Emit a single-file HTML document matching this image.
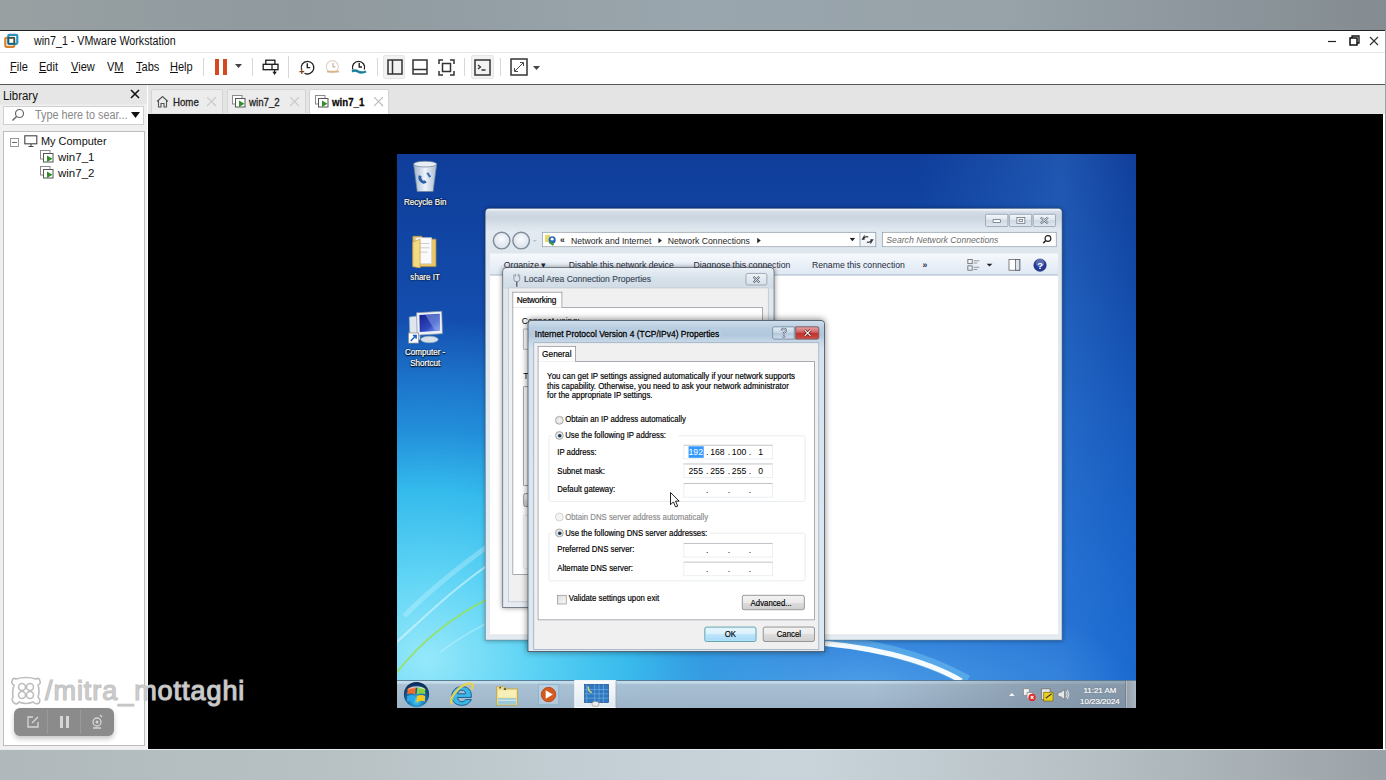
<!DOCTYPE html>
<html><head><meta charset="utf-8">
<style>
*{margin:0;padding:0;box-sizing:border-box}
html,body{width:1386px;height:780px;overflow:hidden;background:#9ba3a9;font-family:"Liberation Sans",sans-serif}
.a{position:absolute}
#topbar{left:0;top:0;width:1386px;height:30px;background:linear-gradient(90deg,#98a0a2 0%,#8f999e 22%,#9aa6ad 50%,#97a2a9 72%,#848c91 100%)}
#botbar{left:0;top:749px;width:1386px;height:31px;background:linear-gradient(90deg,#b0b8bb 0%,#b8c2c5 25%,#c4d0d6 45%,#c9d4da 58%,#b6c0c5 78%,#9ba2a7 100%);border-top:1px solid #e8ecee}
#win{left:0;top:30px;width:1385px;height:719px;background:#fff;border-top:1px solid #222}
#title{left:34px;top:34px;font-size:12px;color:#111;transform:scaleX(0.89);transform-origin:0 0;white-space:nowrap}
#menu{left:0;top:52px;width:1385px;height:32px;border-top:1px solid #e6e6e6;background:#fff}
#menusep{left:0;top:84px;width:1385px;height:1px;background:#555}
.mi{position:absolute;top:60px;font-size:12px;color:#111;transform:scaleX(0.92);transform-origin:0 0}
#lib{left:0;top:85px;width:147px;height:664px;background:linear-gradient(180deg,#e6e6e6 0px,#e6e6e6 19px,#f0f0f0 20px)}
#vmarea{left:148px;top:114px;width:1235px;height:635px;background:#000}
#tabbar{left:148px;top:85px;width:1237px;height:29px;background:#e4e4e4}
#desk{left:397px;top:154px;width:739px;height:554px;overflow:hidden}
#vm{left:0;top:0;width:1024px;height:768px;transform:scale(0.72168);transform-origin:0 0;background:#1d5fbf;overflow:hidden;font-family:"Liberation Sans",sans-serif}
.sep{top:58px;width:1px;height:18px;background:#d8d8d8}
.tab{top:89px;height:24px;background:#ececec;border:1px solid #d4d4d4;border-bottom:none;border-radius:2px 2px 0 0}
.tabt{top:96px;font-size:11px;color:#222;-webkit-text-stroke:0.3px #222;transform:scaleX(0.88);transform-origin:0 0}
.tabx{top:97px;width:10px;height:10px}
.dl{font-size:12px;color:#fff;text-align:center;transform:scaleX(0.93);transform-origin:50% 0;-webkit-text-stroke:0.3px #fff;text-shadow:0 1px 2px #000,0 0 3px rgba(0,0,0,0.9),1px 1px 1px rgba(0,0,0,0.6)}
.cb{height:18px;border:1px solid #8a98a8;border-radius:2px;background:linear-gradient(180deg,#f4f7fa,#dde4ec 50%,#d0d9e3 51%,#dfe6ee)}
.cmd{top:146.5px;font-size:12px;color:#1e2a3a}
.btn{border:1px solid #707070;border-radius:3px;background:linear-gradient(180deg,#f2f2f2 0%,#ebebeb 50%,#dddddd 51%,#cfcfcf 100%)}
.def{border-color:#3a8598;box-shadow:inset 0 0 0 1px #b6f0fa;background:linear-gradient(180deg,#eaf6fd 0%,#d9f0fc 50%,#bee6fd 51%,#a7d9f5 100%)}
.tt{font-size:12px;color:#000;-webkit-text-stroke:0.25px #000}
.sx{transform:scaleX(0.9);transform-origin:0 0;white-space:nowrap}
.rad{width:12px;height:12px;border-radius:50%;border:1px solid #8e8f8f;background:radial-gradient(circle at 50% 50%,#f4f4f4,#d6d6d6)}
.rad.on::after{content:"";position:absolute;left:2.5px;top:2.5px;width:5px;height:5px;border-radius:50%;background:#1d3d5e}
.rad.dis{border-color:#c5c5c5;background:#f4f4f4}
.ipf{width:124px;height:20px;background:#fff;border:1px solid #abadb3;border-color:#abadb3 #e3e9ef #e3e9ef #e3e9ef}
.ipt{font-size:12px;color:#000;width:124px;padding-left:8px;white-space:pre}
.ipt i{font-style:normal;display:inline-block;width:12px;text-align:center}
.ipo{width:30px;text-align:center;font-size:12px;color:#000}
</style></head><body>
<div class="a" id="topbar"></div>
<div class="a" id="botbar"></div>
<div class="a" id="win"></div>
<div class="a" id="menu"></div>
<div class="a" id="menusep"></div>
<div class="a" id="lib"></div>
<div class="a" id="tabbar"></div>
<div class="a" id="vmarea"></div>
<!-- VMware chrome -->
<svg class="a" style="left:3px;top:32px" width="17" height="17" viewBox="0 0 17 17">
<rect x="2.3" y="5.8" width="9" height="9" rx="1" fill="none" stroke="#d9822b" stroke-width="2.2"/>
<rect x="5.3" y="2.8" width="9" height="9" rx="1" fill="none" stroke="#2d92c0" stroke-width="2.2"/>
<rect x="5.3" y="5.8" width="6" height="6" fill="none" stroke="#1d5a6a" stroke-width="1.4"/>
</svg>
<div class="a" id="title">win7_1 - VMware Workstation</div>
<svg class="a" style="left:1320px;top:31px" width="65" height="20" viewBox="0 0 65 20">
<line x1="8" y1="10.5" x2="16" y2="10.5" stroke="#222" stroke-width="1.2"/>
<rect x="30" y="7" width="7" height="7" fill="none" stroke="#111" stroke-width="1.5"/>
<path d="M32 7 V5 H39 V12 H37" fill="none" stroke="#111" stroke-width="1.3"/>
<path d="M50 6 L58 14 M58 6 L50 14" stroke="#333" stroke-width="1.2"/>
</svg>
<div class="mi" style="left:10px"><u>F</u>ile</div>
<div class="mi" style="left:39px"><u>E</u>dit</div>
<div class="mi" style="left:71px"><u>V</u>iew</div>
<div class="mi" style="left:107px">V<u>M</u></div>
<div class="mi" style="left:136px"><u>T</u>abs</div>
<div class="mi" style="left:170px"><u>H</u>elp</div>
<div class="a sep" style="left:203px"></div>
<div class="a" style="left:215px;top:59px;width:4px;height:16px;background:#d4491f"></div>
<div class="a" style="left:223px;top:59px;width:4px;height:16px;background:#d4491f"></div>
<svg class="a" style="left:235px;top:64px" width="8" height="5"><path d="M0 0H7L3.5 4z" fill="#444"/></svg>
<div class="a sep" style="left:252px"></div>
<svg class="a" style="left:255px;top:52px" width="120" height="30" viewBox="0 0 120 30">
 <rect x="10.8" y="8.2" width="9.1" height="4.4" fill="#fff" stroke="#1a1a1a" stroke-width="1.3"/>
 <rect x="8.2" y="12.3" width="14.8" height="5.4" fill="#fff" stroke="#1a1a1a" stroke-width="1.3"/>
 <path d="M17 12.3V17.7M19.6 17.7V20" stroke="#1a1a1a" stroke-width="1.2"/>
 <path d="M17.4 19.8H21.8L19.6 23Z" fill="#1a1a1a"/>
 <path d="M33.5 4V26" stroke="#d8d8d8" stroke-width="1"/>
 <path d="M46.5 17.5 A6.3 6.3 0 1 1 49.5 21.2" fill="none" stroke="#222" stroke-width="1.3"/>
 <path d="M52.3 11.2V15.6H55.2" fill="none" stroke="#222" stroke-width="1.4"/>
 <path d="M46.8 17.3V22M44.5 19.6H49.2" stroke="#7a4020" stroke-width="1.2"/>
 <circle cx="77.3" cy="14.7" r="6" fill="none" stroke="#e2d6ca" stroke-width="1.3"/>
 <path d="M78 11V14.8H80.5" fill="none" stroke="#c8b8a8" stroke-width="1.3"/>
 <path d="M72 19.6H84" stroke="#d9b48c" stroke-width="1.8"/>
 <path d="M97.8 17.5 A6.1 6.1 0 1 1 109.3 17.5" fill="none" stroke="#222" stroke-width="1.4"/>
 <path d="M104.2 11V15H107" fill="none" stroke="#222" stroke-width="1.4"/>
 <path d="M97 19.5 Q100 17.5 103 19.5 T111 19.5" fill="none" stroke="#1a7f9a" stroke-width="2.4"/>
</svg>
<div class="a sep" style="left:377px"></div>
<div class="a" style="left:383px;top:55px;width:22px;height:24px;background:#f2f2f2;border:1px solid #e6e6e6;border-radius:2px"></div>
<svg class="a" style="left:387px;top:59px" width="16" height="16" viewBox="0 0 16 16">
<rect x="1" y="1" width="14" height="14" fill="none" stroke="#333" stroke-width="1.5"/><path d="M5.5 1v14" stroke="#333" stroke-width="1.5"/></svg>
<svg class="a" style="left:412px;top:59px" width="16" height="16" viewBox="0 0 16 16">
<rect x="1" y="1" width="14" height="14" fill="none" stroke="#333" stroke-width="1.5"/><path d="M1 10.5h14" stroke="#333" stroke-width="1.5"/></svg>
<svg class="a" style="left:438px;top:59px" width="17" height="17" viewBox="0 0 17 17">
<path d="M1 5V1H5M12 1H16V5M16 12V16H12M5 16H1V12" fill="none" stroke="#333" stroke-width="1.5"/><rect x="4.5" y="4.5" width="8" height="8" fill="none" stroke="#333" stroke-width="1.5"/></svg>
<div class="a sep" style="left:464px"></div>
<div class="a" style="left:471px;top:55px;width:23px;height:24px;background:#f2f2f2;border:1px solid #e6e6e6;border-radius:2px"></div>
<svg class="a" style="left:474px;top:59px" width="17" height="17" viewBox="0 0 17 17">
<rect x="1" y="1" width="15" height="15" fill="none" stroke="#333" stroke-width="1.5"/><path d="M4 6l2.5 2L4 10M7.5 11h4" fill="none" stroke="#333" stroke-width="1.3"/></svg>
<div class="a sep" style="left:500px"></div>
<svg class="a" style="left:510px;top:58px" width="18" height="18" viewBox="0 0 18 18">
<rect x="1" y="1" width="16" height="16" fill="none" stroke="#333" stroke-width="1.5"/><path d="M5 13L13 5M10 4.5H13.5V8M4.5 10V13.5H8" fill="none" stroke="#333" stroke-width="0.9"/></svg>
<svg class="a" style="left:533px;top:66px" width="8" height="5"><path d="M0 0H7L3.5 4z" fill="#444"/></svg>

<!-- library -->
<div class="a" style="left:3px;top:89px;font-size:12px;color:#111;transform:scaleX(0.95);transform-origin:0 0">Library</div>
<svg class="a" style="left:130px;top:89px" width="10" height="10" viewBox="0 0 10 10"><path d="M1 1L9 9M9 1L1 9" stroke="#111" stroke-width="1.6"/></svg>
<div class="a" style="left:3px;top:106px;width:141px;height:19px;background:#fff;border:1px solid #cfcfcf"></div>
<svg class="a" style="left:11px;top:108px" width="14" height="14" viewBox="0 0 14 14"><circle cx="8.5" cy="5.5" r="4" fill="none" stroke="#666" stroke-width="1.2"/><path d="M5.5 8.5L1.5 12.5" stroke="#666" stroke-width="1.4"/></svg>
<div class="a" style="left:35px;top:108px;font-size:12px;color:#888;transform:scaleX(0.9);transform-origin:0 0;white-space:nowrap">Type here to sear...</div>
<svg class="a" style="left:131px;top:112px" width="9" height="6"><path d="M0 0H9L4.5 6z" fill="#111"/></svg>
<div class="a" style="left:3px;top:131px;width:142px;height:615px;background:#fff;border:1px solid #bdbdbd"></div>
<svg class="a" style="left:10px;top:138px" width="9" height="9" viewBox="0 0 9 9"><rect x="0.5" y="0.5" width="8" height="8" fill="#fff" stroke="#999"/><path d="M2 4.5h5" stroke="#666"/></svg>
<svg class="a" style="left:24px;top:135px" width="14" height="13" viewBox="0 0 14 13"><rect x="0.8" y="0.8" width="12" height="8" fill="none" stroke="#444" stroke-width="1.1"/><path d="M4.5 11.5h5M7 9v2.5" stroke="#444" stroke-width="1.1"/></svg>
<div class="a" style="left:41px;top:135px;font-size:11.5px;color:#111;transform:scaleX(0.95);transform-origin:0 0;white-space:nowrap">My Computer</div>
<svg class="a vmi" style="left:39px;top:149px" width="16" height="15" viewBox="0 0 16 15"><rect x="1.5" y="1.5" width="9.5" height="8.5" fill="#fff" stroke="#8a8a8a" stroke-width="1"/><rect x="4.5" y="4.5" width="9.5" height="8.5" fill="#fff" stroke="#555" stroke-width="1"/><path d="M8 6.5v6.5l5.5-3.2z" fill="#2f8f2a"/></svg>
<div class="a" style="left:58px;top:151px;font-size:11.5px;color:#111">win7_1</div>
<svg class="a vmi" style="left:39px;top:165px" width="16" height="15" viewBox="0 0 16 15"><rect x="1.5" y="1.5" width="9.5" height="8.5" fill="#fff" stroke="#8a8a8a" stroke-width="1"/><rect x="4.5" y="4.5" width="9.5" height="8.5" fill="#fff" stroke="#555" stroke-width="1"/><path d="M8 6.5v6.5l5.5-3.2z" fill="#2f8f2a"/></svg>
<div class="a" style="left:58px;top:167px;font-size:11.5px;color:#111">win7_2</div>

<!-- tabs -->
<div class="a tab" style="left:151px;width:72px"></div>
<svg class="a" style="left:156px;top:95px" width="13" height="13" viewBox="0 0 13 13"><path d="M1 6.5L6.5 1.5L12 6.5M2.5 5.5V12H5V8.5H8V12H10.5V5.5" fill="none" stroke="#555" stroke-width="1.1"/></svg>
<div class="a tabt" style="left:173px">Home</div>
<svg class="a tabx" style="left:207px"><path d="M0 0L9 9M9 0L0 9" stroke="#c8c8c8" stroke-width="1.1"/></svg>
<div class="a tab" style="left:227px;width:79px"></div>
<svg class="a" style="left:231px;top:94px" width="16" height="15" viewBox="0 0 16 15"><rect x="1.5" y="1.5" width="9.5" height="8.5" fill="#fff" stroke="#8a8a8a" stroke-width="1"/><rect x="4.5" y="4.5" width="9.5" height="8.5" fill="#fff" stroke="#555" stroke-width="1"/><path d="M8 6.5v6.5l5.5-3.2z" fill="#2f8f2a"/></svg>
<div class="a tabt" style="left:249px">win7_2</div>
<svg class="a tabx" style="left:290px"><path d="M0 0L9 9M9 0L0 9" stroke="#c8c8c8" stroke-width="1.1"/></svg>
<div class="a tab" style="left:309px;width:80px;background:#fff;height:25px"></div>
<svg class="a" style="left:314px;top:94px" width="16" height="15" viewBox="0 0 16 15"><rect x="1.5" y="1.5" width="9.5" height="8.5" fill="#fff" stroke="#8a8a8a" stroke-width="1"/><rect x="4.5" y="4.5" width="9.5" height="8.5" fill="#fff" stroke="#555" stroke-width="1"/><path d="M8 6.5v6.5l5.5-3.2z" fill="#2f8f2a"/></svg>
<div class="a tabt" style="left:332px;font-weight:bold;color:#000">win7_1</div>
<svg class="a tabx" style="left:374px"><path d="M0 0L9 9M9 0L0 9" stroke="#bbb" stroke-width="1.1"/></svg>
<div class="a" id="desk"><div class="a" id="vm">
<!-- wallpaper -->
<div class="a" style="left:0;top:0;width:1024px;height:768px;background:linear-gradient(180deg,#0f3d9a 0%,#1249a8 22%,#175cc0 50%,#1a68cf 75%,#1c70d8 100%)"></div>
<div class="a" style="left:0;top:0;width:1024px;height:768px;background:linear-gradient(90deg,rgba(20,60,140,0) 0%,rgba(0,0,0,0) 70%,rgba(60,130,215,0.35) 90%,rgba(20,70,160,0.1) 100%)"></div>
<div class="a" style="left:0;top:0;width:1024px;height:768px;background:radial-gradient(ellipse 560px 470px at 40px 700px,rgba(150,232,250,1) 0%,rgba(95,212,245,1) 25%,rgba(52,186,236,1) 50%,rgba(36,150,222,0.85) 68%,rgba(32,112,208,0) 100%)"></div>
<div class="a" style="left:0;top:0;width:1024px;height:768px;background:radial-gradient(ellipse 380px 140px at 640px 740px,rgba(120,200,245,0.55) 0%,rgba(60,150,225,0) 100%)"></div>
<svg class="a" style="left:0;top:0" width="1024" height="768" viewBox="0 0 1024 768">
 <path d="M0 676 C40 640 80 600 140 560 C200 520 260 490 330 460" stroke="rgba(225,250,255,0.55)" stroke-width="3" fill="none"/>
 <path d="M10 640 C50 600 100 560 160 520" stroke="rgba(220,248,255,0.3)" stroke-width="7" fill="none"/>
 <path d="M0 718 C30 680 70 645 125 617 C180 590 240 570 320 550" stroke="rgba(150,225,90,0.9)" stroke-width="2.5" fill="none"/>
 <path d="M60 690 C100 660 140 640 200 620" stroke="rgba(230,252,255,0.35)" stroke-width="2" fill="none"/>
 <path d="M560 672 C650 676 730 696 790 730" stroke="rgba(120,200,245,0.45)" stroke-width="16" fill="none"/>
 <path d="M560 676 C650 680 730 700 782 730" stroke="rgba(248,253,255,0.98)" stroke-width="7" fill="none"/>
</svg>
<!-- desktop icons -->
<svg class="a" style="left:20px;top:8px" width="38" height="46" viewBox="0 0 38 46">
 <defs><linearGradient id="rb" x1="0" x2="1"><stop offset="0" stop-color="#9fb4cc"/><stop offset="0.5" stop-color="#eef4fa"/><stop offset="1" stop-color="#a9bcd2"/></linearGradient></defs>
 <path d="M3 6 L35 6 L30 44 L8 44 Z" fill="url(#rb)" stroke="#6f8298" stroke-width="1"/>
 <ellipse cx="19" cy="6" rx="16" ry="4" fill="#e8eef5" stroke="#6f8298"/>
 <path d="M12 22 C 10 28 16 33 20 30" stroke="#2d5fa8" stroke-width="4" fill="none"/>
 <path d="M22 18 L26 24" stroke="#3c70b8" stroke-width="3"/>
</svg>
<div class="a dl" style="left:0;top:59px;width:78px">Recycle Bin</div>
<svg class="a" style="left:18px;top:110px" width="40" height="48" viewBox="0 0 40 48">
 <path d="M4 4 H16 L19 8 H36 V46 H4 Z" fill="#e8c66a" stroke="#b8923a"/>
 <path d="M8 6 H30 V42 H8 Z" fill="#fafafa" stroke="#ccc"/>
 <path d="M13 14 H27 M13 20 H27 M13 26 H24" stroke="#bbb"/>
 <path d="M4 12 L14 8 V48 L4 46 Z" fill="#f3da84" stroke="#c9a243"/>
</svg>
<div class="a dl" style="left:0;top:163px;width:78px">share IT</div>
<svg class="a" style="left:12px;top:213px" width="56" height="52" viewBox="0 0 56 52">
 <defs><linearGradient id="scr" x1="0" y1="0" x2="1" y2="1"><stop offset="0" stop-color="#16208a"/><stop offset="0.6" stop-color="#3048c0"/><stop offset="1" stop-color="#8aa8f0"/></linearGradient></defs>
 <path d="M5 13 L19 11 L20 44 L6 46 Z" fill="#dfe6ee" stroke="#8ea3bb"/>
 <path d="M15 7 L50 5 L51 36 L16 38 Z" fill="#eef2f7" stroke="#7d90a8"/>
 <path d="M19 10 L47 8.5 L47.5 32 L19.5 33.5 Z" fill="url(#scr)"/>
 <path d="M27 9.5 L40 31 L47 31 L46 9 Z" fill="rgba(150,180,240,0.45)"/>
 <ellipse cx="33" cy="44" rx="12" ry="4.5" fill="#d8e0ea" stroke="#9aabc0"/>
 <rect x="4" y="35" width="14" height="14" fill="#fff" stroke="#8a8a8a"/>
 <path d="M7 46 L14 39 M10 38.5 H14.5 V43" stroke="#1a5ec8" stroke-width="2" fill="none"/>
</svg>
<div class="a dl" style="left:0;top:268px;width:78px;line-height:15px">Computer -<br>Shortcut</div>

<!-- explorer window -->
<div class="a" style="left:122px;top:75px;width:800px;height:599px;border:1px solid rgba(40,60,80,0.55);border-radius:6px 6px 0 0;background:linear-gradient(180deg,#f6f9fb 0px,#d2dce6 4px,#c9d5e0 12px,#d8e1ea 22px,#e3eaf1 32px,#dfe7ee 60px,#e4ebf2 100%);box-shadow:0 0 6px rgba(0,0,0,0.35)"></div>
<!-- caption buttons -->
<div class="a cb" style="left:815px;top:83px;width:32px"></div>
<div class="a cb" style="left:848px;top:83px;width:32px"></div>
<div class="a cb" style="left:881px;top:83px;width:32px"></div>
<svg class="a" style="left:815px;top:83px" width="98" height="18" viewBox="0 0 98 18">
 <rect x="11" y="8" width="10" height="4" fill="#fff" stroke="#59667a"/>
 <rect x="44" y="5" width="11" height="8" fill="#fff" stroke="#59667a"/><rect x="47" y="7.5" width="5" height="3" fill="none" stroke="#59667a"/>
 <path d="M77 5 L87 13 M87 5 L77 13" stroke="#59667a" stroke-width="3"/><path d="M77 5 L87 13 M87 5 L77 13" stroke="#fff" stroke-width="1.2"/>
</svg>
<!-- nav buttons -->
<svg class="a" style="left:130px;top:106px" width="66" height="28" viewBox="0 0 66 28">
 <defs><radialGradient id="nb" cx="0.5" cy="0.4" r="0.6"><stop offset="0" stop-color="#fafcfe"/><stop offset="1" stop-color="#d8e0ea"/></radialGradient></defs>
 <circle cx="15" cy="14" r="11.5" fill="url(#nb)" stroke="#7f8b98" stroke-width="2"/>
 <circle cx="42" cy="14" r="11.5" fill="url(#nb)" stroke="#7f8b98" stroke-width="2"/>
 <path d="M58 13 L61 16 L64 13" fill="#b8c2cc"/>
</svg>
<!-- address box -->
<div class="a" style="left:201px;top:108px;width:440px;height:21px;background:#fff;border:1px solid #8c98a6;border-right:none"></div>
<div class="a" style="left:641px;top:108px;width:23px;height:21px;background:linear-gradient(#fbfcfd,#eef2f6);border:1px solid #8c98a6"></div>
<svg class="a" style="left:204px;top:110px" width="18" height="18" viewBox="0 0 18 18"><rect x="1" y="2" width="7" height="10" fill="#e8d86a"/><circle cx="11" cy="9" r="5" fill="#2a6ab8"/><path d="M7 12 L13 16" stroke="#3a9a3a" stroke-width="3"/><circle cx="11" cy="8" r="2" fill="#fff"/></svg>
<div class="a" style="left:226px;top:112px;font-size:12px;color:#222;font-weight:bold">&laquo;</div>
<div class="a" style="left:241px;top:114px;font-size:12px;color:#1e1e1e">Network and Internet</div>
<svg class="a" style="left:362px;top:116px" width="6" height="8"><path d="M0 0 L5 4 L0 8Z" fill="#222"/></svg>
<div class="a" style="left:375px;top:114px;font-size:12px;color:#1e1e1e">Network Connections</div>
<svg class="a" style="left:499px;top:116px" width="6" height="8"><path d="M0 0 L5 4 L0 8Z" fill="#222"/></svg>
<svg class="a" style="left:627px;top:116px" width="8" height="5"><path d="M0 0 H8 L4 5Z" fill="#222"/></svg>
<svg class="a" style="left:643px;top:110px" width="18" height="17" viewBox="0 0 18 17"><path d="M5 3 L2 8 L5 8 M13 14 L16 9 L13 9" stroke="#333" stroke-width="1.6" fill="none"/><path d="M3 8 Q6 3 10 5 M15 9 Q12 14 8 12" stroke="#333" stroke-width="1.6" fill="none"/></svg>
<div class="a" style="left:672px;top:108px;width:242px;height:21px;background:#fff;border:1px solid #8c98a6"></div>
<div class="a" style="left:678px;top:113px;font-size:12px;font-style:italic;color:#6d6d6d">Search Network Connections</div>
<svg class="a" style="left:894px;top:111px" width="14" height="14" viewBox="0 0 14 14"><circle cx="8" cy="6" r="4" fill="none" stroke="#222" stroke-width="1.6"/><path d="M5 9 L1.5 12.5" stroke="#222" stroke-width="2"/></svg>
<!-- command bar -->
<div class="a" style="left:129px;top:138px;width:787px;height:30px;background:linear-gradient(180deg,#f6f9fd 0%,#eaf0f8 50%,#dfe8f4 100%);border-bottom:1px solid #a6b4c6;border-top:1px solid #fff"></div>
<div class="a cmd" style="left:148px">Organize &#9662;</div>
<div class="a cmd" style="left:238px">Disable this network device</div>
<div class="a cmd" style="left:411px">Diagnose this connection</div>
<div class="a cmd" style="left:575px">Rename this connection</div>
<div class="a cmd" style="left:728px;font-weight:bold">&raquo;</div>
<svg class="a" style="left:789px;top:144px" width="40" height="20" viewBox="0 0 40 20">
 <rect x="2" y="2" width="6" height="6" fill="none" stroke="#555"/><rect x="2" y="11" width="6" height="6" fill="none" stroke="#555"/>
 <path d="M10 4 H18 M10 7 H15 M10 13 H18 M10 16 H15" stroke="#777"/>
 <path d="M28 8 H36 L32 12Z" fill="#222"/>
</svg>
<svg class="a" style="left:846px;top:144px" width="20" height="20" viewBox="0 0 20 20"><rect x="2" y="2" width="15" height="15" fill="#fff" stroke="#555"/><rect x="11" y="2" width="6" height="15" fill="#d8e4f0" stroke="#555"/></svg>
<svg class="a" style="left:881px;top:144px" width="20" height="20" viewBox="0 0 20 20"><circle cx="10" cy="10" r="8.5" fill="#22399a" stroke="#152870"/><circle cx="10" cy="7" r="6" fill="rgba(255,255,255,0.25)"/><text x="10" y="15" text-anchor="middle" font-size="13" font-weight="bold" fill="#fff" font-family="Liberation Sans">?</text></svg>
<!-- content -->
<div class="a" style="left:129px;top:169px;width:787px;height:498px;background:#fff;border-bottom:1px solid #c8d2dc"></div>

<!-- LAC properties dialog -->
<div class="a" style="left:146px;top:157px;width:377px;height:472px;border:1px solid rgba(30,40,55,0.75);border-radius:6px 6px 0 0;background:linear-gradient(180deg,#eaf0f5 0px,#d8e2eb 14px,#d0dbe5 28px,#e0e8ef 29px,#e6ecf2 100%);box-shadow:0 0 8px rgba(0,0,0,0.4)"></div>
<div class="a" style="left:154px;top:185px;width:361px;height:436px;background:#f0f0f0;border:1px solid #b6c2ce"></div>
<svg class="a" style="left:160px;top:165px" width="12" height="20" viewBox="0 0 12 20"><path d="M2 2 V9 Q2 12 6 12 Q10 12 10 9 V2" fill="#dde3ea" stroke="#6f7c8a"/><path d="M4 1 V5 M8 1 V5" stroke="#6f7c8a"/><path d="M6 12 V19" stroke="#445" stroke-width="1.6"/></svg>
<div class="a" style="left:176px;top:167px;font-size:12px;color:#3c4a5a;-webkit-text-stroke:0.2px #3c4a5a;transform:scaleX(0.985);transform-origin:0 0">Local Area Connection Properties</div>
<div class="a" style="left:483px;top:165px;width:30px;height:17px;border:1px solid #8a96a4;border-radius:3px;background:linear-gradient(180deg,#eef2f6,#d8e0e8)"></div>
<svg class="a" style="left:491px;top:168px" width="14" height="12" viewBox="0 0 14 12"><path d="M3 2 L11 10 M11 2 L3 10" stroke="#5d6b7c" stroke-width="3"/><path d="M3 2 L11 10 M11 2 L3 10" stroke="#f0f4f8" stroke-width="1.2"/></svg>
<!-- tab + panel -->
<div class="a" style="left:160px;top:212px;width:347px;height:371px;background:#fff;border:1px solid #898c95"></div>
<div class="a" style="left:160px;top:191px;width:69px;height:22px;background:#fff;border:1px solid #898c95;border-bottom:none"></div>
<div class="a tt" style="left:166px;top:196px;font-size:11.5px;letter-spacing:-0.3px">Networking</div>
<div class="a" style="left:173px;top:225px;font-size:12px;color:#000">Connect using:</div>
<div class="a" style="left:175px;top:242px;width:320px;height:29px;background:#fff;border:1px solid #a0a0a0"></div>
<div class="a" style="left:175px;top:301px;font-size:12px;color:#000">This connection uses the following items:</div>
<div class="a" style="left:175px;top:322px;width:320px;height:138px;background:#fff;border:1px solid #828790"></div>
<div class="a btn" style="left:175px;top:470px;width:75px;height:19px"></div>
<div class="a" style="left:175px;top:500px;width:320px;height:75px;border:1px solid #d5dfe5;border-radius:3px"></div>

<!-- TCP/IPv4 dialog -->
<div class="a" style="left:181px;top:230px;width:412px;height:460px;border:1px solid rgba(20,30,45,0.85);border-radius:6px 6px 0 0;background:linear-gradient(180deg,#cfdeec 0px,#b8cde1 10px,#b0c7dc 20px,#c6d7e7 29px,#d6e3ef 40px,#dde8f2 100%);box-shadow:0 0 9px rgba(0,0,0,0.45)"></div>
<div class="a" style="left:189px;top:261px;width:396px;height:426px;background:#f0f0f0;border:1px solid #8ea4ba"></div>
<div class="a" style="left:191px;top:242px;font-size:12px;color:#000;-webkit-text-stroke:0.35px #000;text-shadow:0 0 6px rgba(255,255,255,0.9);transform:scaleX(0.975);transform-origin:0 0">Internet Protocol Version 4 (TCP/IPv4) Properties</div>
<div class="a" style="left:520px;top:239px;width:31px;height:18px;border:1px solid #6c7f94;border-radius:3px 0 0 3px;background:linear-gradient(180deg,#e4edf6,#c4d4e4 50%,#b4c8dc 51%,#cadbeb)"></div>
<svg class="a" style="left:529px;top:240px" width="14" height="16" viewBox="0 0 14 16"><path d="M4 5 Q4 2 7 2 Q10 2 10 5 Q10 7 7 8 V10" stroke="#4a5a6c" stroke-width="2.6" fill="none"/><path d="M4 5 Q4 2 7 2 Q10 2 10 5 Q10 7 7 8 V10" stroke="#f4f8fc" stroke-width="1.1" fill="none"/><circle cx="7" cy="13" r="1.4" fill="#f4f8fc" stroke="#4a5a6c"/></svg>
<div class="a" style="left:552px;top:239px;width:33px;height:18px;border:1px solid #6a2a24;border-radius:0 3px 3px 0;background:linear-gradient(180deg,#e8a0a0,#d06060 45%,#c0302c 50%,#d04a40 100%)"></div>
<svg class="a" style="left:561px;top:241px" width="16" height="14" viewBox="0 0 16 14"><path d="M4 3 L12 11 M12 3 L4 11" stroke="#5a1c14" stroke-width="3.4"/><path d="M4 3 L12 11 M12 3 L4 11" stroke="#fff" stroke-width="1.6"/></svg>
<!-- tab -->
<div class="a" style="left:195px;top:287px;width:384px;height:359px;background:#fff;border:1px solid #898c95"></div>
<div class="a" style="left:195px;top:266px;width:53px;height:22px;background:#fff;border:1px solid #898c95;border-bottom:none"></div>
<div class="a tt" style="left:201px;top:271px;font-size:11.5px">General</div>
<div class="a tt" style="left:208px;top:301.5px;line-height:13.1px;transform:scaleX(0.91);transform-origin:0 0;white-space:nowrap">You can get IP settings assigned automatically if your network supports<br>this capability. Otherwise, you need to ask your network administrator<br>for the appropriate IP settings.</div>
<div class="a rad" style="left:219px;top:363px"></div>
<div class="a tt sx" style="left:233px;top:361px">Obtain an IP address automatically</div>
<div class="a" style="left:210px;top:390px;width:356px;height:92px;border:1px solid #dde4e8;border-radius:3px"></div>
<div class="a" style="left:214px;top:382px;width:176px;height:16px;background:#fff"></div>
<div class="a rad on" style="left:219px;top:384px"></div>
<div class="a tt sx" style="left:233px;top:382px">Use the following IP address:</div>
<div class="a tt sx" style="left:222px;top:406px">IP address:</div>
<div class="a ipf" style="left:397px;top:403px"></div>
<div class="a" style="left:404px;top:405px;width:21px;height:16px;background:#3399ff"></div>
<div class="a ipo" style="left:399px;top:406px;color:#fff">192</div><div class="a ipo" style="left:429px;top:406px;color:#000">168</div><div class="a ipo" style="left:459px;top:406px;color:#000">100</div><div class="a ipo" style="left:489px;top:406px;color:#000">1</div><div class="a ipo" style="left:415px;top:406px">.</div><div class="a ipo" style="left:445px;top:406px">.</div><div class="a ipo" style="left:474px;top:406px">.</div>
<div class="a tt sx" style="left:222px;top:432px">Subnet mask:</div>
<div class="a ipf" style="left:397px;top:429px"></div>
<div class="a ipo" style="left:399px;top:432px;color:#000">255</div><div class="a ipo" style="left:429px;top:432px;color:#000">255</div><div class="a ipo" style="left:459px;top:432px;color:#000">255</div><div class="a ipo" style="left:489px;top:432px;color:#000">0</div><div class="a ipo" style="left:415px;top:432px">.</div><div class="a ipo" style="left:445px;top:432px">.</div><div class="a ipo" style="left:474px;top:432px">.</div>
<div class="a tt sx" style="left:222px;top:458px">Default gateway:</div>
<div class="a ipf" style="left:397px;top:456px"></div>
<div class="a ipo" style="left:415px;top:459px">.</div><div class="a ipo" style="left:445px;top:459px">.</div><div class="a ipo" style="left:474px;top:459px">.</div>
<div class="a rad dis" style="left:219px;top:497px"></div>
<div class="a tt sx" style="left:233px;top:495.5px;color:#8d8d8d;-webkit-text-stroke:0.25px #8d8d8d">Obtain DNS server address automatically</div>
<div class="a" style="left:210px;top:525px;width:356px;height:67px;border:1px solid #dde4e8;border-radius:3px"></div>
<div class="a" style="left:214px;top:517px;width:220px;height:16px;background:#fff"></div>
<div class="a rad on" style="left:219px;top:519px"></div>
<div class="a tt sx" style="left:233px;top:518px">Use the following DNS server addresses:</div>
<div class="a tt sx" style="left:222px;top:541px">Preferred DNS server:</div>
<div class="a ipf" style="left:397px;top:539px"></div>
<div class="a ipo" style="left:415px;top:542px">.</div><div class="a ipo" style="left:445px;top:542px">.</div><div class="a ipo" style="left:474px;top:542px">.</div>
<div class="a tt sx" style="left:222px;top:567px">Alternate DNS server:</div>
<div class="a ipf" style="left:397px;top:565px"></div>
<div class="a ipo" style="left:415px;top:568px">.</div><div class="a ipo" style="left:445px;top:568px">.</div><div class="a ipo" style="left:474px;top:568px">.</div>
<div class="a" style="left:222px;top:611px;width:13px;height:13px;border:1px solid #8f8f8f;background:linear-gradient(135deg,#dcdcdc,#fafafa)"></div>
<div class="a tt sx" style="left:238px;top:609px">Validate settings upon exit</div>
<div class="a btn" style="left:478px;top:611px;width:87px;height:21px"></div>
<div class="a tt sx" style="left:490px;top:615.5px">Advanced...</div>
<div class="a btn def" style="left:426px;top:655px;width:72px;height:21px"></div>
<div class="a tt" style="left:426px;top:658px;width:72px;text-align:center;transform:scaleX(0.9)">OK</div>
<div class="a btn" style="left:507px;top:655px;width:72px;height:21px"></div>
<div class="a tt" style="left:507px;top:658px;width:72px;text-align:center;transform:scaleX(0.9)">Cancel</div>
<!-- cursor -->
<svg class="a" style="left:378px;top:468px" width="16" height="24" viewBox="0 0 16 24"><path d="M1 1 V18 L5 14 L8 21 L11 20 L8 13 H13 Z" fill="#fff" stroke="#000" stroke-width="1.2"/></svg>

<!-- taskbar -->
<div class="a" style="left:0;top:729px;width:1024px;height:39px;background:linear-gradient(180deg,rgba(200,222,235,0.95) 0px,rgba(200,222,235,0.95) 3px,rgba(172,192,210,0.96) 5px,rgba(168,188,206,0.96) 50%,rgba(160,180,200,0.97) 100%);border-top:1px solid rgba(10,50,80,0.6)"></div>
<div class="a" style="left:660px;top:730px;width:364px;height:38px;background:linear-gradient(90deg,rgba(120,135,150,0) 0%,rgba(110,125,140,0.45) 60%,rgba(100,115,130,0.5) 100%)"></div>
<!-- start orb -->
<svg class="a" style="left:6px;top:729px" width="42" height="40" viewBox="0 0 42 40">
 <defs><radialGradient id="orb" cx="0.5" cy="0.75" r="0.7"><stop offset="0" stop-color="#50d8f0"/><stop offset="0.45" stop-color="#1a78b8"/><stop offset="1" stop-color="#0a2a58"/></radialGradient></defs>
 <circle cx="21" cy="20" r="17.5" fill="url(#orb)"/>
 <path d="M9 12 Q14 8 20 11 L19 20 Q14 17 8 20 Z" fill="#f06a2a"/>
 <path d="M22 11 Q28 8 33 12 L33 20 Q28 17 21.5 20 Z" fill="#8ad040"/>
 <path d="M8 22 Q14 19 19 22 L18 31 Q13 28 8 30 Z" fill="#28a8e8"/>
 <path d="M21.5 22 Q28 19 33 22 L32.5 30 Q27 27 21 31 Z" fill="#f8c820"/>
 <path d="M7 14 Q21 2 35 14 Q21 8 7 14Z" fill="rgba(255,255,255,0.55)"/>
</svg>
<!-- IE -->
<svg class="a" style="left:70px;top:731px" width="38" height="36" viewBox="0 0 38 36">
 <path d="M20 7 C11 7 6 13 6 20 C6 28 12 33 20 33 C26 33 31 30 33 25 H25 C24 27 22 28 20 28 C16 28 14 25 14 22 H33 C33 21 33 20 33 19 C33 12 28 7 20 7 Z M14 17 C14 14 17 12 20 12 C23 12 25 14 25 17 Z" fill="#3ab8e6" stroke="#17508a" stroke-width="1.2"/>
 <path d="M6 31 C2 24 14 6 29 3 C35 2 37 5 33 11" stroke="#e6d050" stroke-width="3.2" fill="none"/>
</svg>
<!-- explorer -->
<svg class="a" style="left:134px;top:734px" width="38" height="32" viewBox="0 0 38 32">
 <path d="M4 4 H14 L17 7 H33 V30 H4 Z" fill="#eedf88" stroke="#b8a048"/>
 <rect x="6" y="9" width="25" height="10" fill="#f6f0b8"/>
 <path d="M8 6 L10 5 M14 7 L17 8" stroke="#444" stroke-width="2"/>
 <rect x="6" y="20" width="25" height="9" fill="#9cc8d8"/>
 <path d="M6 23 H31" stroke="#d8eef4" stroke-width="1.5"/>
</svg>
<!-- media player -->
<svg class="a" style="left:194px;top:734px" width="32" height="30" viewBox="0 0 32 30">
 <rect x="2" y="1" width="28" height="28" rx="1" fill="rgba(230,240,250,0.3)" stroke="rgba(100,170,200,0.7)"/>
 <circle cx="16" cy="15" r="10" fill="#d65a1c" stroke="#a83a10" stroke-width="1"/>
 <path d="M12 9 L22 15 L12 21 Z" fill="#fff"/>
</svg>
<!-- active task button -->
<div class="a" style="left:246px;top:729px;width:58px;height:39px;background:linear-gradient(180deg,rgba(250,252,253,0.95),rgba(232,240,246,0.9));border:1px solid rgba(255,255,255,0.9);border-right:1px solid rgba(60,80,100,0.6)"></div>
<svg class="a" style="left:258px;top:733px" width="38" height="34" viewBox="0 0 38 34">
 <rect x="2" y="2" width="33" height="25" fill="#2f78c0" stroke="#1d4f92"/>
 <path d="M5 2V27M16 2V27M22 2V27M28 2V27M2 9H35M2 15H35M2 21H35" stroke="#6eaee0" stroke-width="1"/>
 <path d="M7 5 Q7 13 12 13" stroke="#d8e070" stroke-width="2" fill="none"/>
 <ellipse cx="17" cy="29" rx="5" ry="3.5" fill="#eee" stroke="#999"/>
</svg>
<!-- tray -->
<svg class="a" style="left:848px;top:746px" width="8" height="6"><path d="M0 5 L4 1 L8 5Z" fill="#fff" opacity="0.9"/></svg>
<svg class="a" style="left:867px;top:738px" width="20" height="22" viewBox="0 0 20 22">
 <rect x="1" y="3" width="8" height="9" fill="#f4f4f4" stroke="#888"/><rect x="6" y="8" width="8" height="9" fill="#f4f4f4" stroke="#888"/>
 <circle cx="13" cy="15" r="5" fill="#e02828"/><path d="M11 13 L15 17 M15 13 L11 17" stroke="#fff" stroke-width="1.5"/>
</svg>
<svg class="a" style="left:891px;top:738px" width="20" height="22" viewBox="0 0 20 22">
 <path d="M2 3 H14 V18 H2 Z" fill="#e6e6e6" stroke="#666"/><path d="M5 8 H18 V20 H5 Z" fill="#e8d020" stroke="#7a6a10"/><path d="M8 16 L16 10" stroke="#222" stroke-width="1.5"/>
</svg>
<svg class="a" style="left:914px;top:739px" width="20" height="20" viewBox="0 0 20 20">
 <path d="M2 7 H6 L11 3 V17 L6 13 H2 Z" fill="#e8e8e8" stroke="#777"/><path d="M13 6 Q16 10 13 14 M15 4 Q19 10 15 16" stroke="#eee" stroke-width="1.3" fill="none"/>
</svg>
<div class="a" style="left:938px;top:735.5px;width:72px;text-align:center;font-size:11px;line-height:15.8px;color:#fff;-webkit-text-stroke:0.3px #fff;text-shadow:0 0 2px rgba(0,0,0,0.5)">11:21 AM<br>10/23/2024</div>
<div class="a" style="left:1009px;top:730px;width:15px;height:38px;background:linear-gradient(90deg,rgba(150,160,170,0.8),rgba(185,195,205,0.75));border-left:1px solid rgba(60,70,80,0.6);box-shadow:inset 1px 0 0 rgba(255,255,255,0.5)"></div>
</div></div>
<!-- watermark -->
<svg class="a" style="left:10px;top:675px" width="32" height="31" viewBox="0 0 32 31">
 <g fill="none" stroke="#bdbdbd" stroke-width="1.6">
 <path d="M6 4 Q3 2 2 6 Q1 9 4 10 Q2 16 3 22 Q1 25 4 28 Q7 30 9 27 Q16 30 23 27 Q26 30 29 28 Q31 25 28 22 Q30 16 28 10 Q31 9 30 6 Q29 2 26 4 Q16 1 6 4Z"/>
 <circle cx="12" cy="12" r="3.5"/><circle cx="20" cy="12" r="3.5"/><circle cx="12" cy="20" r="3.5"/><circle cx="20" cy="20" r="3.5"/>
 </g>
</svg>
<div class="a" id="wmt" style="left:45px;top:676px;font-family:'Liberation Sans',sans-serif;font-weight:normal;font-size:27px;color:#d0d0d0;-webkit-text-stroke:1.2px #c4c4c4;letter-spacing:0.95px;white-space:nowrap">/mitra_mottaghi</div>
<div class="a" style="left:14px;top:708px;width:100px;height:28px;border-radius:6px;background:#8b8b8b;box-shadow:0 3px 5px rgba(0,0,0,0.22)"></div>
<div class="a" style="left:47px;top:710px;width:1px;height:24px;background:rgba(255,255,255,0.12)"></div>
<div class="a" style="left:80px;top:710px;width:1px;height:24px;background:rgba(255,255,255,0.12)"></div>
<svg class="a" style="left:26px;top:715px" width="14" height="14" viewBox="0 0 14 14"><path d="M7 2 H2 V12 H12 V7" fill="none" stroke="#d6d6d6" stroke-width="1.3"/><path d="M6 8 L12 2" stroke="#d6d6d6" stroke-width="1.5"/></svg>
<div class="a" style="left:60px;top:716px;width:3px;height:12px;background:#d6d6d6"></div>
<div class="a" style="left:66px;top:716px;width:3px;height:12px;background:#d6d6d6"></div>
<svg class="a" style="left:90px;top:714px" width="14" height="16" viewBox="0 0 14 16"><circle cx="7" cy="8" r="4" fill="none" stroke="#d6d6d6" stroke-width="1.3"/><circle cx="7" cy="8" r="1.5" fill="#d6d6d6"/><path d="M3 14 H11 M10 1 L12 3" stroke="#d6d6d6" stroke-width="1.3"/></svg>
</body></html>
